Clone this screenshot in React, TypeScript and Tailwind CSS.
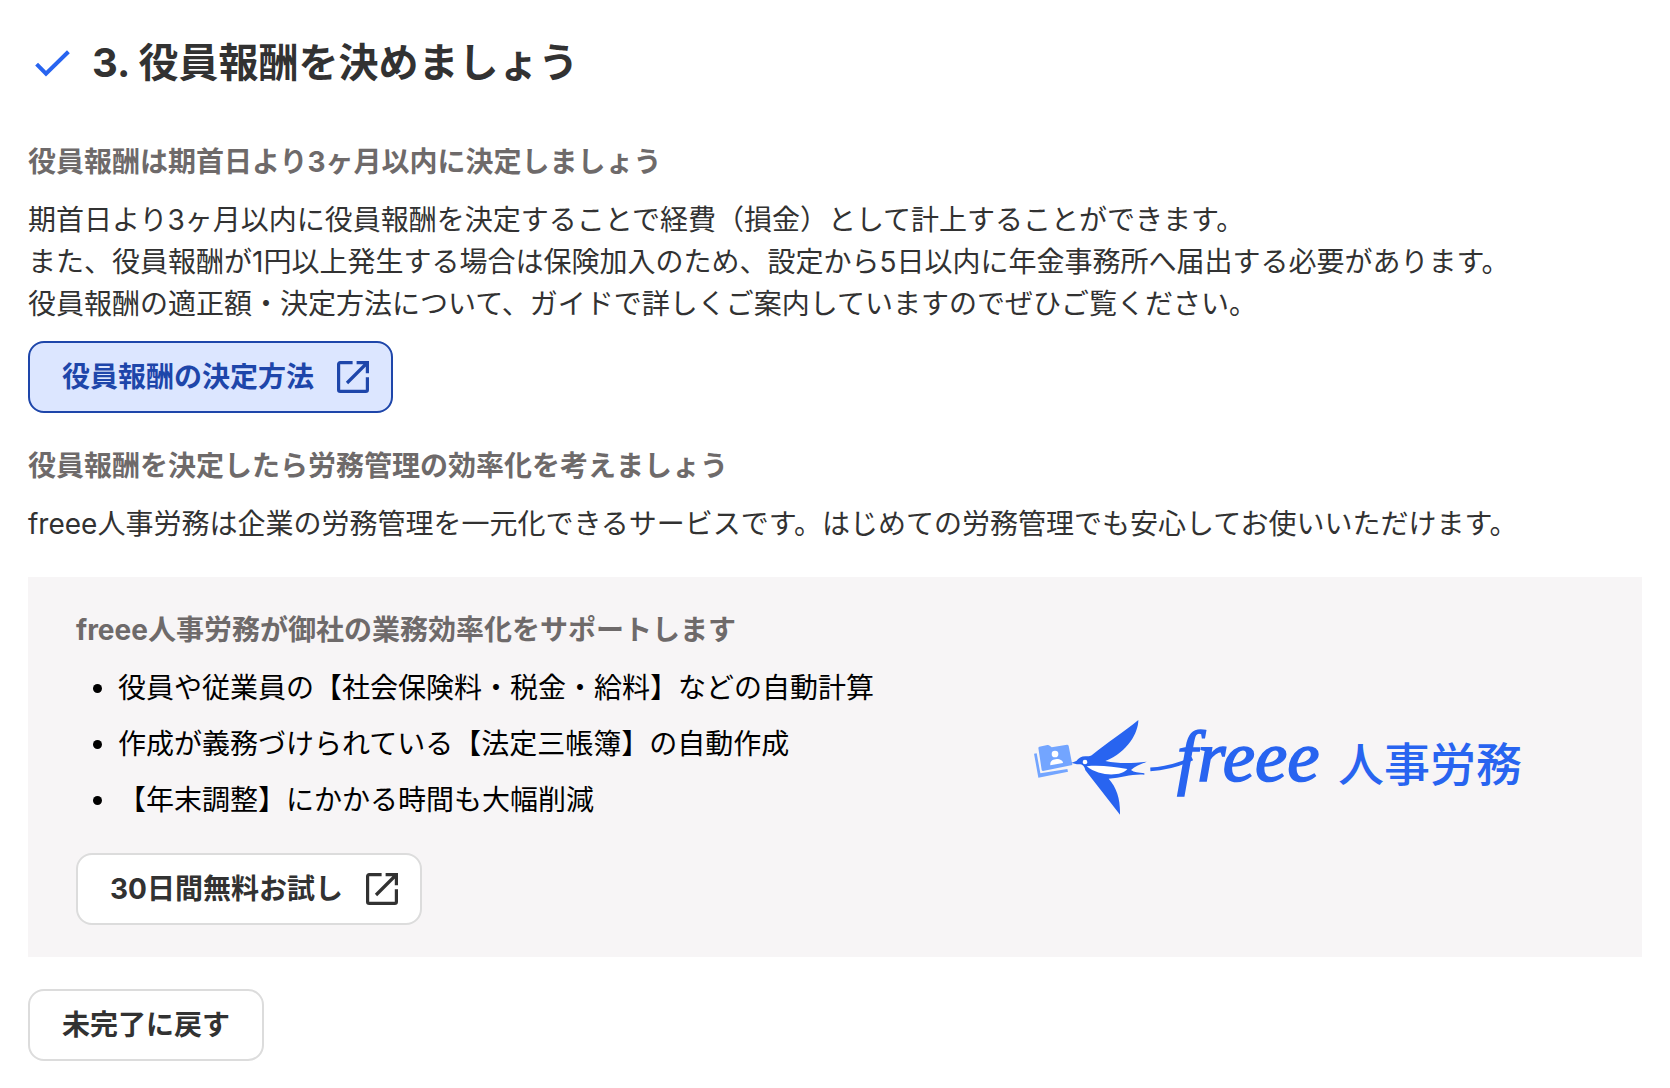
import type { ReactNode } from 'react';

const benefits = [
  '役員や従業員の【社会保険料・税金・給料】などの自動計算',
  '作成が義務づけられている【法定三帳簿】の自動作成',
  '【年末調整】にかかる時間も大幅削減',
];

function CheckIcon() {
  return (
    <svg viewBox="0 0 48 48" className="h-12 w-12 shrink-0" fill="none" stroke="#2864f0" strokeWidth="4" aria-hidden="true">
      <path d="M8.6 25.2 18 34.7 40.4 12.8" />
    </svg>
  );
}

function ExternalIcon() {
  return (
    <svg viewBox="0 0 32 32" className="h-8 w-8 shrink-0" fill="none" stroke="currentColor" strokeWidth="3.2" aria-hidden="true">
      <path d="M15.6 1.6H3.2A1.6 1.6 0 0 0 1.6 3.2v25.6a1.6 1.6 0 0 0 1.6 1.6h25.6a1.6 1.6 0 0 0 1.6-1.6V16.2" />
      <path d="M19.6 1.6h10.8v10.6M30 2 10 22" />
    </svg>
  );
}

function FreeeLogo() {
  return (
    <svg viewBox="36 -16 1470 371" className="w-[490px] max-w-full overflow-visible" role="img" aria-label="freee 人事労務">
      {/* フォルダ */}
      <g fill="#73a5ff">
        <path d="M39 130l8-1 11 60 81-13 2 8-89 18z" />
        <path d="M55 109l24-5q4-1 7 2l6 5 46-8q4 0 5 4l11 57-88 18q-3 0-4-3l-10-66q0-3 3-4z" />
      </g>
      <circle cx="102" cy="131" r="10" fill="#fff" />
      <path d="M88 165c-2-14 8-18 19-19 11 0 19 5 19 12z" fill="#fff" />
      {/* つばめ */}
      <path
        fill="#2864f0"
        d="M150 158l16-6c7-9 15-14 27-14 9 0 13 1 19-3C260 95 308 66 352 29c0 37-31 96-99 123 37 8 77 8 124 2-18 9-35 13-47 25 9 7 22 8 40 10v4c-36-3-67 9-107 12 25 28 35 62 34 108L193 180c-3-12-8-18-19-18-9 0-16-3-24-4z"
      />
      <circle cx="192" cy="155" r="7" fill="#fff" />
      <path d="M197 168c37-4 81 1 122 8-16 22-83 24-122-8z" fill="#fff" />
      <path d="M388 177c48-2 82-12 126-32" fill="none" stroke="#2864f0" strokeWidth="11" />
      <text
        x="468"
        y="213"
        fontSize="218"
        strokeWidth="5"
        className="fill-[#2864f0] stroke-[#2864f0] font-['Liberation_Serif',serif] font-normal italic"
      >
        freee
      </text>
      <text x="951" y="211" fontSize="138" className="fill-[#2864f0] font-medium">
        人事労務
      </text>
    </svg>
  );
}

function SectionTitle({ children }: { children: ReactNode }) {
  return <h3 className="text-[28px] leading-[42px] font-bold text-[#6e6a6a]">{children}</h3>;
}

export default function App() {
  return (
    <main className="bg-white px-7 pt-[33px] pb-7 font-['Inter','Noto_Sans_CJK_JP',sans-serif] text-[28px] leading-[42px] text-[#323232]" lang="ja">
      <div className="flex items-center gap-4">
        <CheckIcon />
        <h2 className="text-[40px] leading-[60px] font-bold">3. 役員報酬を決めましょう</h2>
      </div>

      <section className="mt-12">
        <SectionTitle>役員報酬は期首日より3ヶ月以内に決定しましょう</SectionTitle>
        <p className="mt-4">
          期首日より3ヶ月以内に役員報酬を決定することで経費（損金）として計上することができます。
          <br />
          また、役員報酬が1円以上発生する場合は保険加入のため、設定から5日以内に年金事務所へ届出する必要があります。
          <br />
          役員報酬の適正額・決定方法について、ガイドで詳しくご案内していますのでぜひご覧ください。
        </p>
        <a
          href="#guide"
          className="mt-4 flex h-[72px] w-fit items-center gap-[23px] rounded-2xl border-2 border-[#1e46aa] bg-[#dce6ff] pr-[22px] pl-8 font-bold text-[#1e46aa]"
        >
          役員報酬の決定方法
          <ExternalIcon />
        </a>
      </section>

      <section className="mt-8">
        <SectionTitle>役員報酬を決定したら労務管理の効率化を考えましょう</SectionTitle>
        <p className="mt-4">freee人事労務は企業の労務管理を一元化できるサービスです。はじめての労務管理でも安心してお使いいただけます。</p>

        <div className="mt-8 grid grid-cols-[7fr_5fr] items-center bg-[#f7f5f6] px-12 py-8">
          <div>
            <SectionTitle>freee人事労務が御社の業務効率化をサポートします</SectionTitle>
            <ul className="mt-4 flex list-disc flex-col gap-[14px] pl-[42px] text-black">
              {benefits.map(item => (
                <li key={item}>{item}</li>
              ))}
            </ul>
            <a
              href="#trial"
              className="mt-8 flex h-[72px] w-fit items-center gap-[23px] rounded-2xl border-2 border-[#dcdcdc] bg-white pr-[22px] pl-8 font-bold"
            >
              30日間無料お試し
              <ExternalIcon />
            </a>
          </div>
          <div className="flex justify-center">
            <FreeeLogo />
          </div>
        </div>
      </section>

      <button type="button" className="mt-8 block h-[72px] rounded-2xl border-2 border-[#dcdcdc] bg-white px-8 font-bold">
        未完了に戻す
      </button>
    </main>
  );
}
